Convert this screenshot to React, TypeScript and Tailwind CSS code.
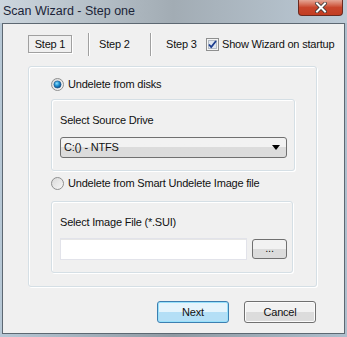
import React from "react";

const font = { fontFamily: '"Liberation Sans", Arial, sans-serif' };

function Radio({ checked }: { checked?: boolean }) {
  return (
    <svg width="13" height="13" viewBox="0 0 13 13" className="shrink-0">
      <defs>
        <linearGradient id={checked ? "rg1" : "rg0"} x1="0" y1="0" x2="1" y2="1">
          <stop offset="0" stopColor="#d8d8d8" />
          <stop offset="1" stopColor="#f8f8f8" />
        </linearGradient>
        <radialGradient id="dot" cx="0.4" cy="0.35" r="0.7">
          <stop offset="0" stopColor="#8fe0ff" />
          <stop offset="0.5" stopColor="#1d8fd0" />
          <stop offset="1" stopColor="#0b3f7a" />
        </radialGradient>
      </defs>
      <circle cx="6.5" cy="6.5" r="6" fill={`url(#${checked ? "rg1" : "rg0"})`} stroke="#8e8f8f" />
      {checked && <circle cx="6.5" cy="6.5" r="3.6" fill="url(#dot)" stroke="#1c4f83" strokeWidth="0.6" />}
    </svg>
  );
}

function Checkbox() {
  return (
    <svg width="13" height="13" viewBox="0 0 13 13" className="shrink-0">
      <rect x="0.5" y="0.5" width="12" height="12" fill="#f4f4f4" stroke="#8e8f8f" />
      <rect x="2.5" y="2.5" width="8" height="8" fill="#dfe6ee" stroke="#b4bcc6" />
      <path d="M3 6.5 L5.2 9 L10 3" fill="none" stroke="#1b3d8f" strokeWidth="1.8" />
    </svg>
  );
}

function Separator() {
  return (
    <div className="flex h-[23px] shrink-0">
      <div className="w-px bg-[#a0a0a0]" />
      <div className="w-px bg-white" />
    </div>
  );
}

export default function App() {
  return (
    <div
      className="w-[347px] h-[337px] flex flex-col overflow-hidden text-[11px] tracking-[-0.2px] text-[#111] bg-gradient-to-r from-[#b7c8d6] via-[#8f9aa3] to-[#aebfcd]"
      style={font}
    >
      {/* Title bar */}
      <div className="h-[23px] shrink-0 flex items-start justify-between bg-gradient-to-r from-[#ccd6de] via-[#a2acb4] to-[#bccad6]">
        <span className="pl-[3px] pt-[4px] text-[12.5px] leading-[15px] tracking-normal text-[#1b2438]">Scan Wizard - Step one</span>
        <div className="mr-[4px] w-[45px] h-[16px] rounded-b-[4px] border border-t-0 border-[#6a2a20] bg-gradient-to-b from-[#e4a595] via-[#c8452c] to-[#c23d22] flex items-center justify-center">
          <svg width="12" height="11" viewBox="0 0 12 11">
            <path d="M2 1.5 L10 9.5 M10 1.5 L2 9.5" stroke="#333" strokeWidth="3.6" strokeLinecap="square" />
            <path d="M2 1.5 L10 9.5 M10 1.5 L2 9.5" stroke="#fff" strokeWidth="2" strokeLinecap="square" />
          </svg>
        </div>
      </div>

      {/* Client area */}
      <div className="mx-[2px] mb-[3px] flex-1 border border-[#5d6872] bg-[#f0f0f0] flex flex-col">
        {/* Step tabs */}
        <div className="mt-[8px] h-[24px] flex items-center">
          <div className="ml-[25px] w-[44px] h-[18px] border border-[#a0a0a0] shadow-[1px_1px_0_#fff] flex items-center justify-center">
            Step 1
          </div>
          <div className="ml-[16px]">
            <Separator />
          </div>
          <span className="ml-[9px] w-[51px]">Step 2</span>
          <Separator />
          <span className="ml-[14px] w-[40px]">Step 3</span>
          <Checkbox />
          <span className="ml-[3px]">Show Wizard on startup</span>
        </div>

        {/* Outer group */}
        <div className="ml-[25px] mt-[10px] w-[289px] h-[221px] rounded-[3px] border border-[#d5dfe5] shadow-[inset_1px_1px_0_#fff,1px_1px_0_#fff] flex flex-col pl-[22px]">
          <div className="mt-[11px] flex items-center gap-[4px] h-[13px]">
            <Radio checked />
            <span>Undelete from disks</span>
          </div>
          <div className="mt-[8px] w-[244px] h-[72px] rounded-[3px] border border-[#d5dfe5] shadow-[inset_1px_1px_0_#fff,1px_1px_0_#fff] flex flex-col pl-[8px]">
            <span className="mt-[14px] leading-[13px]">Select Source Drive</span>
            <div className="mt-[10px] w-[227px] h-[21px] rounded-[3px] border border-[#707070] bg-gradient-to-b from-[#f2f2f2] from-50% to-[#dcdcdc] to-50% flex items-center justify-between px-[3px]">
              <span>C:() - NTFS</span>
              <svg width="8" height="5" viewBox="0 0 8 5" className="mr-[3px]">
                <path d="M0 0 H8 L4 5 Z" fill="#000" />
              </svg>
            </div>
          </div>

          <div className="mt-[6px] flex items-center gap-[4px] h-[13px]">
            <Radio />
            <span>Undelete from Smart Undelete Image file</span>
          </div>
          <div className="mt-[11px] w-[242px] h-[72px] rounded-[3px] border border-[#d5dfe5] shadow-[inset_1px_1px_0_#fff,1px_1px_0_#fff] flex flex-col pl-[8px]">
            <span className="mt-[14px] leading-[13px]">Select Image File (*.SUI)</span>
            <div className="mt-[9px] flex items-center gap-[5px]">
              <div className="w-[187px] h-[22px] border border-[#e2e3ea] bg-white shadow-[inset_0_1px_0_#e6e6e6]" />
              <div className="w-[35px] h-[20px] rounded-[3px] border border-[#707070] bg-gradient-to-b from-[#f2f2f2] from-50% to-[#dcdcdc] to-50% flex items-center justify-center pb-[2px]">
                ...
              </div>
            </div>
          </div>
        </div>

        {/* Buttons */}
        <div className="mt-[14px] flex gap-[15px] pl-[154px]">
          <div className="w-[72px] h-[22px] rounded-[3px] border border-[#3c7fb1] bg-gradient-to-b from-[#e5f4fc] from-50% to-[#b4dff6] to-50% shadow-[inset_0_0_0_1px_#98e1fb] flex items-center justify-center">
            Next
          </div>
          <div className="w-[72px] h-[22px] rounded-[3px] border border-[#707070] bg-gradient-to-b from-[#f2f2f2] from-50% to-[#dcdcdc] to-50% shadow-[inset_0_0_0_1px_#fbfbfb] flex items-center justify-center">
            Cancel
          </div>
        </div>
      </div>
    </div>
  );
}
